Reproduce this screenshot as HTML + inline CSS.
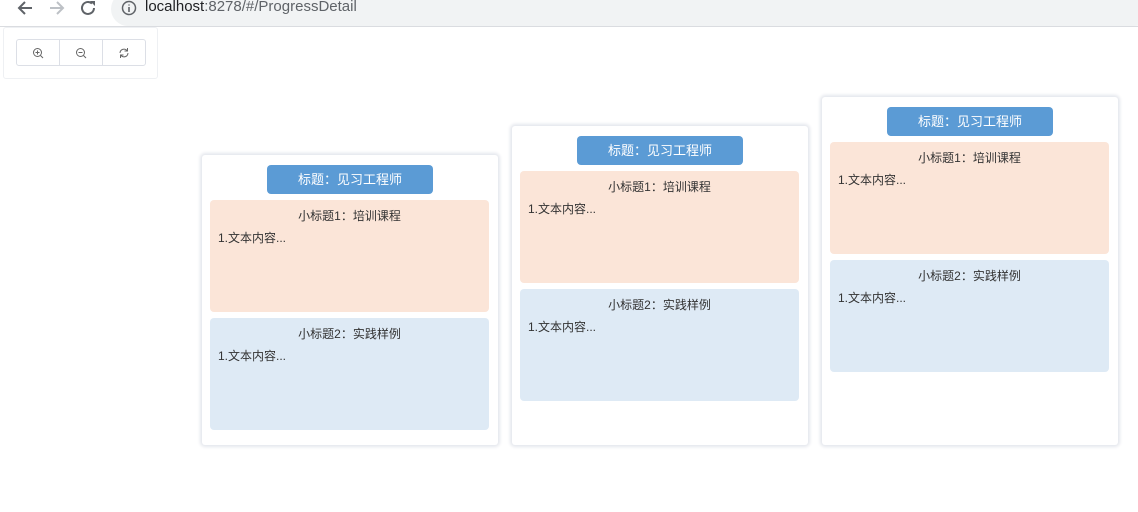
<!DOCTYPE html>
<html><head><meta charset="utf-8"><style>
body{margin:0;width:1138px;height:512px;background:#fff;position:relative;overflow:hidden;font-family:"Liberation Sans","Noto Sans CJK SC",sans-serif;}
.bar{position:absolute;left:0;top:0;width:1138px;height:26px;background:#fff;border-bottom:1px solid #dadce0;}
.url{position:absolute;left:111px;top:-8px;width:1040px;height:34px;border-radius:17px;background:#f1f3f4;}
.url span{position:absolute;left:34px;top:6px;font-size:15px;color:#202124;}
.url span b{font-weight:normal;color:#5f6368;}
.tb{position:absolute;left:3px;top:27px;width:155px;height:52px;border:1px solid #eef0f3;border-radius:3px;box-sizing:border-box;}
.btns{position:absolute;left:16px;top:39px;width:130px;height:27px;border:1px solid #dcdfe6;border-radius:3px;box-sizing:border-box;display:flex;}
.btns div{flex:1;border-right:1px solid #dcdfe6;display:flex;align-items:center;justify-content:center;}
.btns div:last-child{border-right:none}
.card{position:absolute;width:296px;bottom:67px;background:#fff;border-radius:3px;box-shadow:0 0 3px 2px #e4e7ed;}
.t{position:absolute;left:65px;top:10px;width:166px;height:29px;background:#5b9bd5;border-radius:4px;color:#fff;font-size:13px;text-align:center;line-height:29px;}
.bx{position:absolute;left:8px;width:279px;height:112px;border-radius:4px;font-size:12px;color:#333;}
.bx .s{text-align:center;margin-top:8px;line-height:16px;}
.bx .c{margin-left:8px;margin-top:6px;line-height:16px;}
.p{top:45px;background:#fbe5d8;}
.b{top:163px;background:#deeaf5;}
</style></head><body>
<div class="bar">
<svg style="position:absolute;left:16px;top:0" width="18" height="16" viewBox="0 0 18 16"><path d="M16 8H3M9 2L3 8l6 6" stroke="#5f6368" stroke-width="2" fill="none"/></svg>
<svg style="position:absolute;left:48px;top:0" width="18" height="16" viewBox="0 0 18 16"><path d="M2 8h13M9 2l6 6-6 6" stroke="#bdc1c6" stroke-width="2" fill="none"/></svg>
<svg style="position:absolute;left:80px;top:0" width="18" height="16" viewBox="0 0 18 16"><path d="M14 8a6 6 0 1 1-2-4.5" stroke="#5f6368" stroke-width="2" fill="none"/><path d="M10 1h5v5z" fill="#5f6368"/></svg>
<div class="url"><svg style="position:absolute;left:10px;top:8px" width="16" height="16" viewBox="0 0 16 16"><circle cx="8" cy="8" r="6.5" stroke="#5f6368" stroke-width="1.5" fill="none"/><path d="M8 7v5M8 4.5v1" stroke="#5f6368" stroke-width="1.6"/></svg><span>localhost<b>:8278/#/ProgressDetail</b></span></div>
</div>
<div class="tb"></div>
<div class="btns">
<div><svg width="12" height="12" viewBox="0 0 12 12"><circle cx="5.5" cy="5.5" r="4" stroke="#666" fill="none"/><path d="M8.5 8.5l2.5 2.5M3.5 5.5h4M5.5 3.5v4" stroke="#666"/></svg></div>
<div><svg width="12" height="12" viewBox="0 0 12 12"><circle cx="5.5" cy="5.5" r="4" stroke="#666" fill="none"/><path d="M8.5 8.5l2.5 2.5M3.5 5.5h4" stroke="#666"/></svg></div>
<div><svg width="12" height="12" viewBox="0 0 12 12"><path d="M2 6a4 4 0 0 1 7-2.5M10 6a4 4 0 0 1-7 2.5" stroke="#666" fill="none"/><path d="M9.5 1v3h-3M2.5 11V8h3" stroke="#666" fill="none"/></svg></div>
</div>

<div class="card" style="left:202px;height:290px"><div class="t">标题：见习工程师</div>
<div class="bx p"><div class="s">小标题1：培训课程</div><div class="c">1.文本内容...</div></div>
<div class="bx b"><div class="s">小标题2：实践样例</div><div class="c">1.文本内容...</div></div></div>

<div class="card" style="left:512px;height:319px"><div class="t">标题：见习工程师</div>
<div class="bx p"><div class="s">小标题1：培训课程</div><div class="c">1.文本内容...</div></div>
<div class="bx b"><div class="s">小标题2：实践样例</div><div class="c">1.文本内容...</div></div></div>

<div class="card" style="left:822px;height:348px"><div class="t">标题：见习工程师</div>
<div class="bx p"><div class="s">小标题1：培训课程</div><div class="c">1.文本内容...</div></div>
<div class="bx b"><div class="s">小标题2：实践样例</div><div class="c">1.文本内容...</div></div></div>
</body></html>
